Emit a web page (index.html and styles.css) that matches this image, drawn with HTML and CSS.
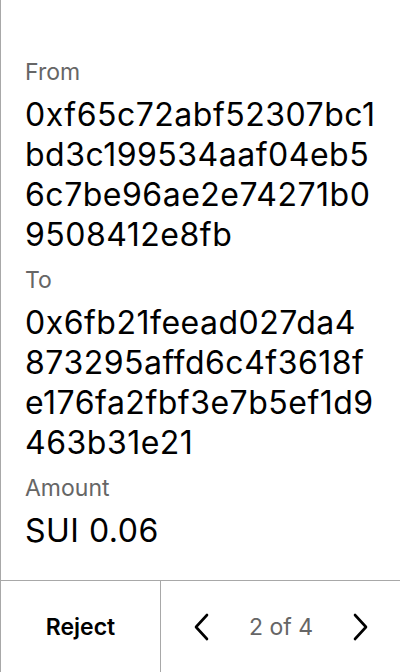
FILE: index.html
```html
<!DOCTYPE html>
<html>
<head>
<meta charset="utf-8">
<link rel="stylesheet" href="styles.css">
</head>
<body>
<div class="screen">
  <div class="content">
    <div class="field">
      <div class="label">From</div>
      <div class="value"><span>0xf65c72abf52307bc1</span><span>bd3c199534aaf04eb5</span><span>6c7be96ae2e74271b0</span><span>9508412e8fb</span></div>
    </div>
    <div class="field">
      <div class="label">To</div>
      <div class="value"><span>0x6fb21feead027da4</span><span>873295affd6c4f3618f</span><span>e176fa2fbf3e7b5ef1d9</span><span>463b31e21</span></div>
    </div>
    <div class="field">
      <div class="label">Amount</div>
      <div class="value"><span>SUI 0.06</span></div>
    </div>
  </div>
  <div class="footer">
    <div class="reject">Reject</div>
    <div class="pager">
      <svg class="chev" width="20" height="28" viewBox="0 0 20 28"><path d="M16 2 L5 14 L16 26" fill="none" stroke="#000" stroke-width="2.6" stroke-linecap="round" stroke-linejoin="round"/></svg>
      <span class="count">2 of 4</span>
      <svg class="chev" width="20" height="28" viewBox="0 0 20 28"><path d="M4 2 L15 14 L4 26" fill="none" stroke="#000" stroke-width="2.6" stroke-linecap="round" stroke-linejoin="round"/></svg>
    </div>
  </div>
</div>
</body>
</html>
```
FILE: styles.css
```css
html, body {
  margin: 0;
  padding: 0;
  background: #fff;
}
body {
  font-family: Inter, "Noto Sans", sans-serif;
  color: #000;
}
.screen {
  width: 400px;
  height: 672px;
  box-sizing: border-box;
  border-left: 1px solid #a8a8a8;
  display: flex;
  flex-direction: column;
}
.content {
  flex: 1;
  padding: 58px 4px 0 24px;
  display: flex;
  flex-direction: column;
  gap: 11px;
}
.field {
  display: flex;
  flex-direction: column;
  gap: 9px;
}
.label {
  font-size: 23px;
  line-height: 28px;
  color: #666;
}
.value {
  font-size: 32px;
  line-height: 40px;
  letter-spacing: 0.5px;
  white-space: nowrap;
}
.value span {
  display: block;
}
.footer {
  height: 92px;
  border-top: 1px solid #a8a8a8;
  display: flex;
  box-sizing: border-box;
}
.reject {
  width: 159px;
  border-right: 1px solid #a8a8a8;
  display: flex;
  align-items: center;
  justify-content: center;
  font-size: 23px;
  font-weight: 600;
}
.pager {
  flex: 1;
  display: flex;
  align-items: center;
  justify-content: space-between;
  padding: 0 29px 0 30px;
}
.count {
  font-size: 23px;
  color: #666;
}
```
